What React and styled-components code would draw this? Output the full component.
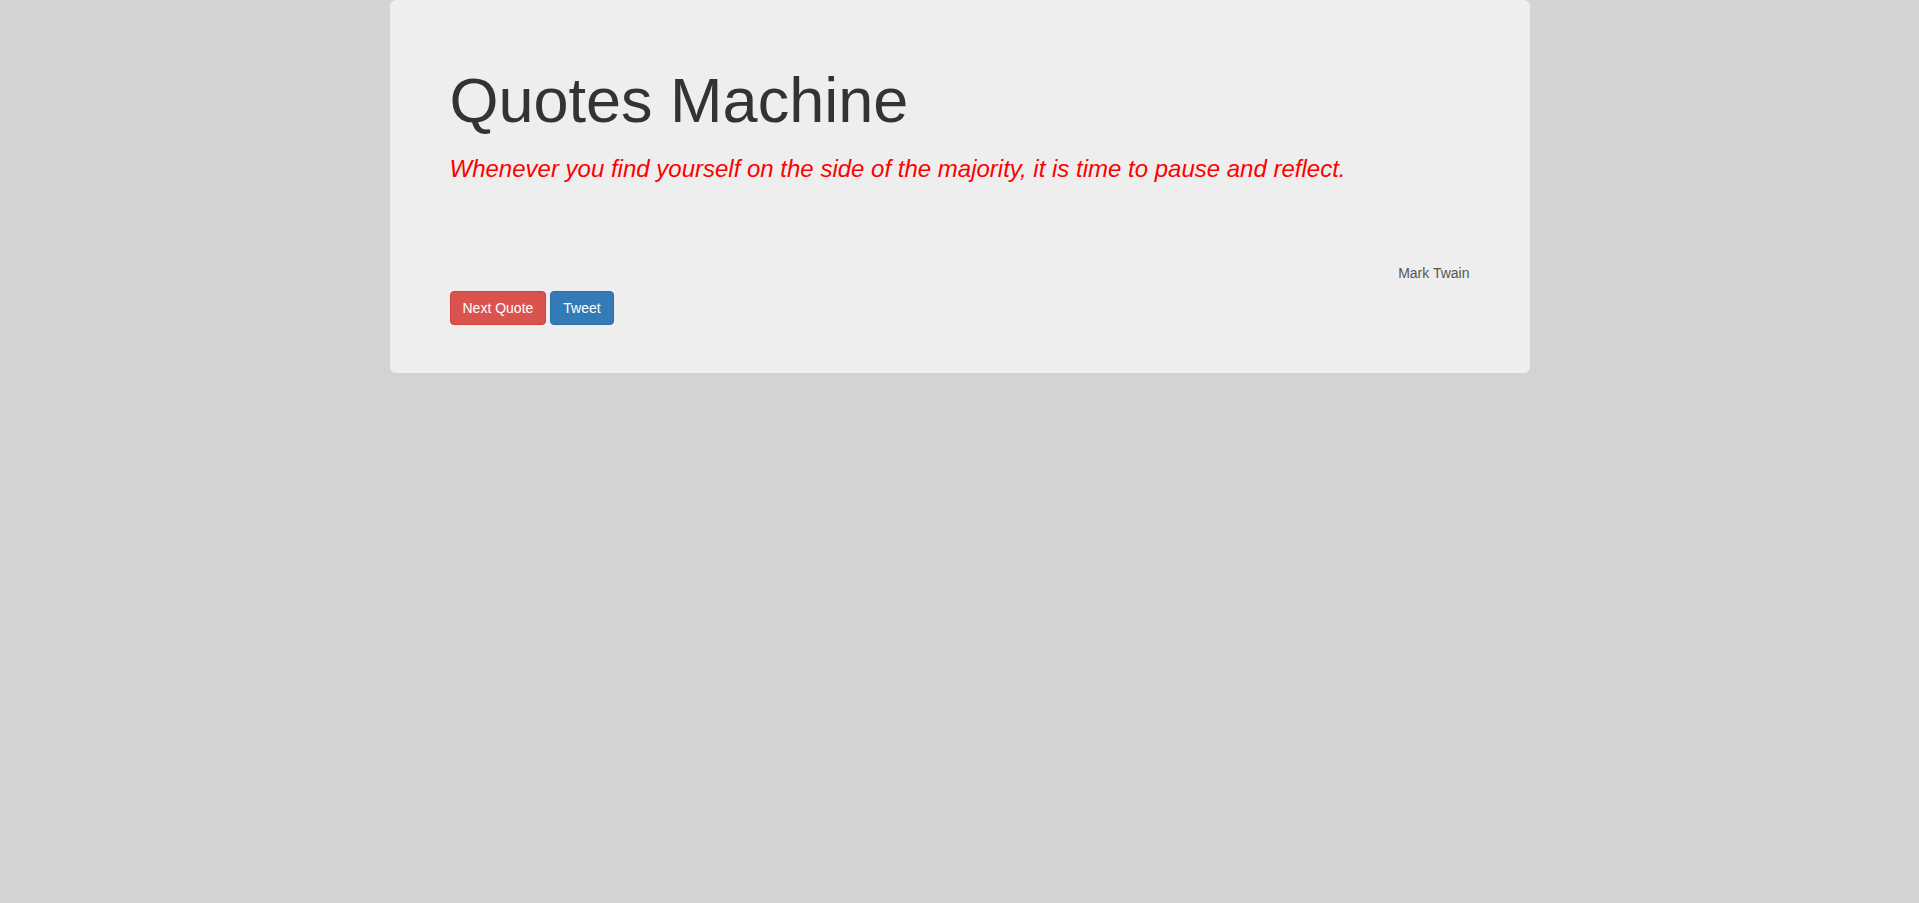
import React, { useState } from 'react';
import styled, { createGlobalStyle } from 'styled-components';

const quotes = [
  {
    text: 'Whenever you find yourself on the side of the majority, it is time to pause and reflect.',
    author: 'Mark Twain',
  },
];

function App() {
  const [index, setIndex] = useState(0);
  const quote = quotes[index];

  return (
    <>
      <GlobalStyle />
      <Container>
        <Jumbotron>
          <Title>Quotes Machine</Title>
          <QuoteText>{quote.text}</QuoteText>
          <Author>{quote.author}</Author>
          <ButtonRow>
            <Button
              variant="danger"
              onClick={() => setIndex((index + 1) % quotes.length)}
            >
              Next Quote
            </Button>
            <Button variant="primary">Tweet</Button>
          </ButtonRow>
        </Jumbotron>
      </Container>
    </>
  );
}

export default App;

const GlobalStyle = createGlobalStyle`
  * {
    box-sizing: border-box;
  }

  html,
  body {
    margin: 0;
    min-height: 100%;
    background: #d3d3d3;
  }

  body {
    min-height: 903px;
    color: #333;
    font-family: 'Liberation Sans', Arial, sans-serif;
    font-size: 14px;
    line-height: 1.42857143;
  }
`;

const Container = styled.div`
  width: 1170px;
  margin: 0 auto;
  padding: 0 15px;
`;

const Jumbotron = styled.div`
  padding: 48px 60px;
  border-radius: 6px;
  background: #eee;
`;

const Title = styled.h1`
  margin: 18px 0 17px;
  color: #333;
  font-size: 63px;
  font-weight: 500;
  line-height: 1.1;
`;

const QuoteText = styled.p`
  margin: 0;
  color: #f00;
  font-size: 24px;
  font-style: italic;
  font-weight: 200;
  line-height: 1.42857143;
`;

const Author = styled.div`
  margin-top: 76px;
  color: #555;
  font-size: 14px;
  line-height: 20px;
  text-align: right;
`;

const ButtonRow = styled.div`
  display: flex;
  gap: 4px;
  margin-top: 8px;
`;

const Button = styled.button`
  display: inline-block;
  height: 34px;
  padding: 6px 12px;
  border: 1px solid
    ${({ variant }) => (variant === 'danger' ? '#d43f3a' : '#2e6da4')};
  border-radius: 4px;
  color: #fff;
  background: ${({ variant }) => (variant === 'danger' ? '#d9534f' : '#337ab7')};
  font-family: 'Liberation Sans', Arial, sans-serif;
  font-size: 14px;
  line-height: 20px;
  cursor: pointer;
`;
